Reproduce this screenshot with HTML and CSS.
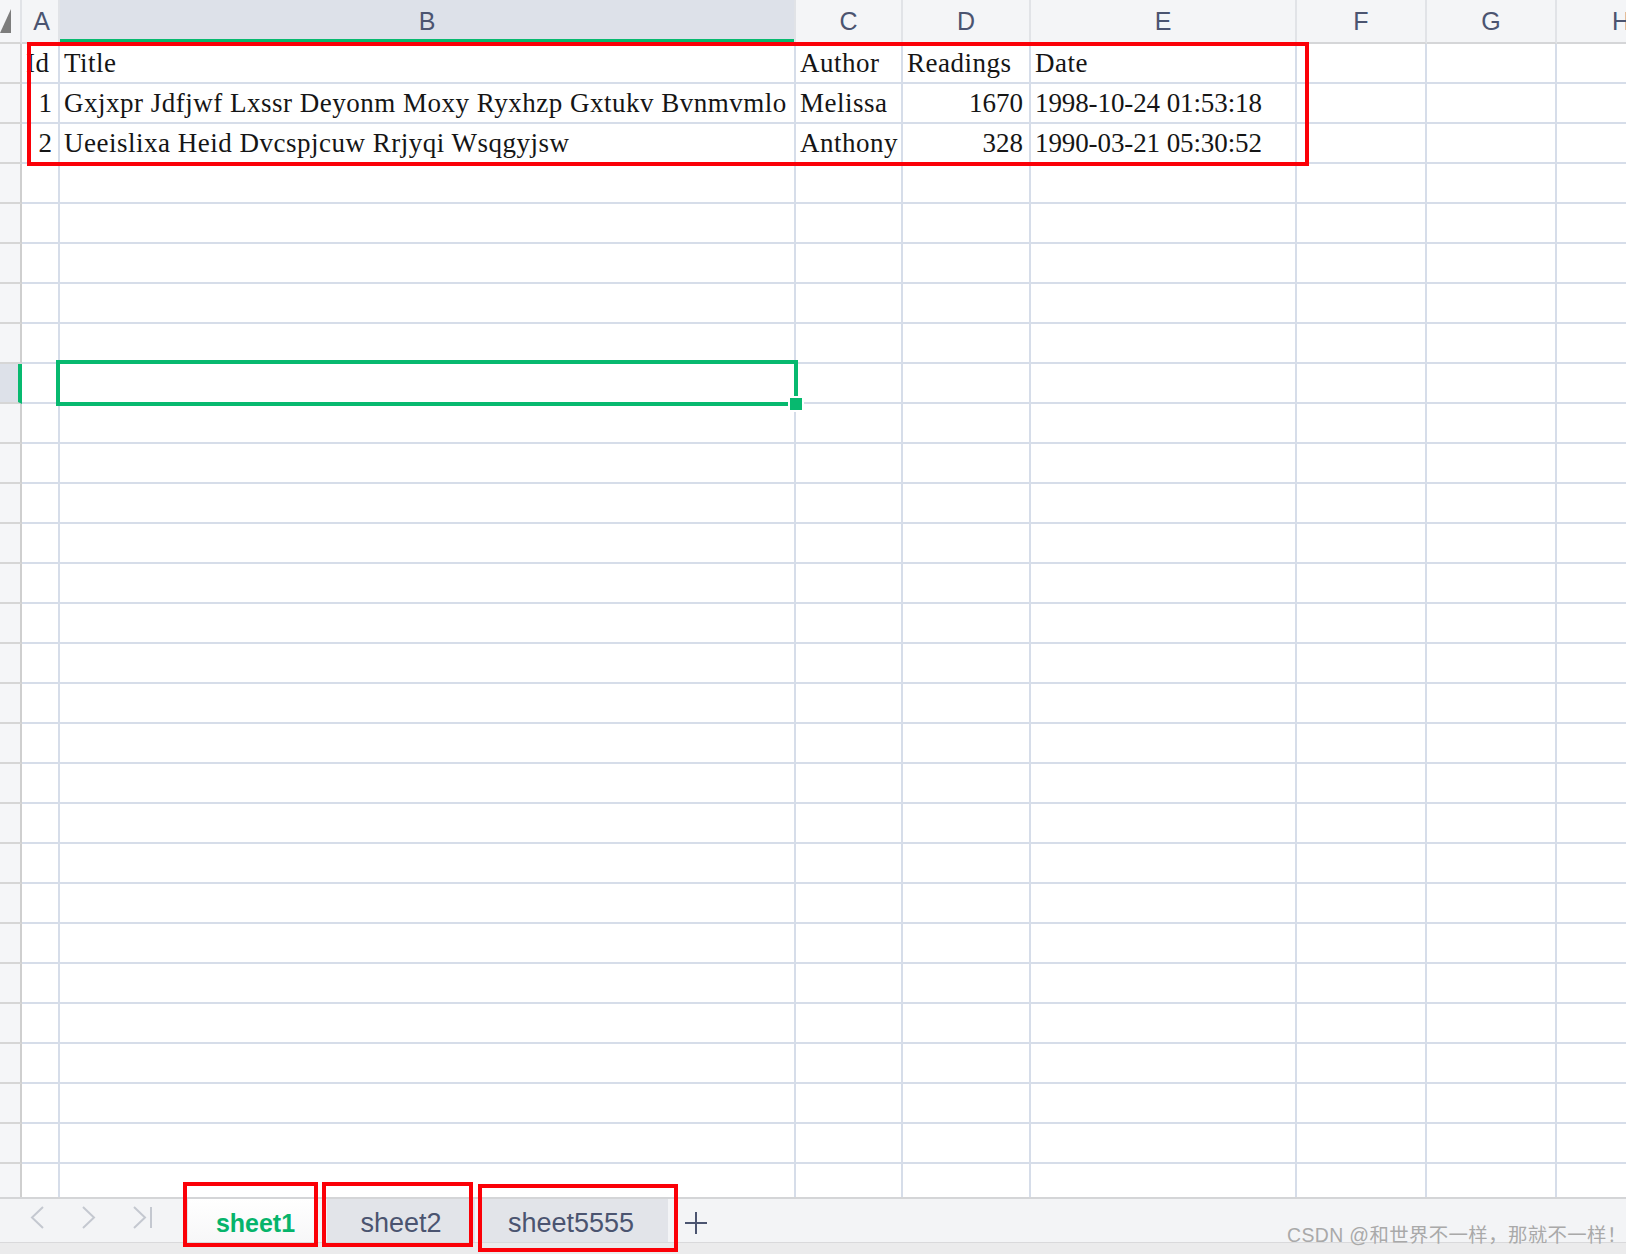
FILE: index.html
```html
<!DOCTYPE html>
<html lang="en">
<head>
<meta charset="utf-8">
<title>Sheet</title>
<link rel="stylesheet" href="styles.css">
</head>
<body>
<div class="app">
  <div class="sheet">
    <div class="row hdr">
      <div class="ch rh corner"><svg class="tri" width="12" height="34" viewBox="0 0 12 34"><polygon points="11,9 11,33 0,33" fill="#7d7d7d"/></svg></div>
      <div class="ch a">A</div>
      <div class="ch b selcol">B</div>
      <div class="ch cc">C</div>
      <div class="ch d">D</div>
      <div class="ch e">E</div>
      <div class="ch f">F</div>
      <div class="ch g">G</div>
      <div class="ch h">H</div>
    </div>
    <div class="row"><div class="rh"></div><div class="c a">Id</div><div class="c b">Title</div><div class="c cc">Author</div><div class="c d">Readings</div><div class="c e">Date</div><div class="c f"></div><div class="c g"></div><div class="c h"></div></div>
    <div class="row"><div class="rh"></div><div class="c a num">1</div><div class="c b">Gxjxpr Jdfjwf Lxssr Deyonm Moxy Ryxhzp Gxtukv Bvnmvmlo</div><div class="c cc">Melissa</div><div class="c d num">1670</div><div class="c e dt">1998-10-24 01:53:18</div><div class="c f"></div><div class="c g"></div><div class="c h"></div></div>
    <div class="row"><div class="rh"></div><div class="c a num">2</div><div class="c b">Ueeislixa Heid Dvcspjcuw Rrjyqi Wsqgyjsw</div><div class="c cc">Anthony</div><div class="c d num">328</div><div class="c e dt">1990-03-21 05:30:52</div><div class="c f"></div><div class="c g"></div><div class="c h"></div></div>
    <!-- rows 4-8 -->
    <div class="row"><div class="rh"></div><div class="c a"></div><div class="c b"></div><div class="c cc"></div><div class="c d"></div><div class="c e"></div><div class="c f"></div><div class="c g"></div><div class="c h"></div></div>
    <div class="row"><div class="rh"></div><div class="c a"></div><div class="c b"></div><div class="c cc"></div><div class="c d"></div><div class="c e"></div><div class="c f"></div><div class="c g"></div><div class="c h"></div></div>
    <div class="row"><div class="rh"></div><div class="c a"></div><div class="c b"></div><div class="c cc"></div><div class="c d"></div><div class="c e"></div><div class="c f"></div><div class="c g"></div><div class="c h"></div></div>
    <div class="row"><div class="rh"></div><div class="c a"></div><div class="c b"></div><div class="c cc"></div><div class="c d"></div><div class="c e"></div><div class="c f"></div><div class="c g"></div><div class="c h"></div></div>
    <div class="row"><div class="rh"></div><div class="c a"></div><div class="c b"></div><div class="c cc"></div><div class="c d"></div><div class="c e"></div><div class="c f"></div><div class="c g"></div><div class="c h"></div></div>
    <!-- row 9 (selected) -->
    <div class="row"><div class="rh selrow"></div><div class="c a"></div><div class="c b"></div><div class="c cc"></div><div class="c d"></div><div class="c e"></div><div class="c f"></div><div class="c g"></div><div class="c h"></div></div>
    <!-- rows 10-19 -->
    <div class="row"><div class="rh"></div><div class="c a"></div><div class="c b"></div><div class="c cc"></div><div class="c d"></div><div class="c e"></div><div class="c f"></div><div class="c g"></div><div class="c h"></div></div>
    <div class="row"><div class="rh"></div><div class="c a"></div><div class="c b"></div><div class="c cc"></div><div class="c d"></div><div class="c e"></div><div class="c f"></div><div class="c g"></div><div class="c h"></div></div>
    <div class="row"><div class="rh"></div><div class="c a"></div><div class="c b"></div><div class="c cc"></div><div class="c d"></div><div class="c e"></div><div class="c f"></div><div class="c g"></div><div class="c h"></div></div>
    <div class="row"><div class="rh"></div><div class="c a"></div><div class="c b"></div><div class="c cc"></div><div class="c d"></div><div class="c e"></div><div class="c f"></div><div class="c g"></div><div class="c h"></div></div>
    <div class="row"><div class="rh"></div><div class="c a"></div><div class="c b"></div><div class="c cc"></div><div class="c d"></div><div class="c e"></div><div class="c f"></div><div class="c g"></div><div class="c h"></div></div>
    <div class="row"><div class="rh"></div><div class="c a"></div><div class="c b"></div><div class="c cc"></div><div class="c d"></div><div class="c e"></div><div class="c f"></div><div class="c g"></div><div class="c h"></div></div>
    <div class="row"><div class="rh"></div><div class="c a"></div><div class="c b"></div><div class="c cc"></div><div class="c d"></div><div class="c e"></div><div class="c f"></div><div class="c g"></div><div class="c h"></div></div>
    <div class="row"><div class="rh"></div><div class="c a"></div><div class="c b"></div><div class="c cc"></div><div class="c d"></div><div class="c e"></div><div class="c f"></div><div class="c g"></div><div class="c h"></div></div>
    <div class="row"><div class="rh"></div><div class="c a"></div><div class="c b"></div><div class="c cc"></div><div class="c d"></div><div class="c e"></div><div class="c f"></div><div class="c g"></div><div class="c h"></div></div>
    <div class="row"><div class="rh"></div><div class="c a"></div><div class="c b"></div><div class="c cc"></div><div class="c d"></div><div class="c e"></div><div class="c f"></div><div class="c g"></div><div class="c h"></div></div>
    <!-- rows 20-29 -->
    <div class="row"><div class="rh"></div><div class="c a"></div><div class="c b"></div><div class="c cc"></div><div class="c d"></div><div class="c e"></div><div class="c f"></div><div class="c g"></div><div class="c h"></div></div>
    <div class="row"><div class="rh"></div><div class="c a"></div><div class="c b"></div><div class="c cc"></div><div class="c d"></div><div class="c e"></div><div class="c f"></div><div class="c g"></div><div class="c h"></div></div>
    <div class="row"><div class="rh"></div><div class="c a"></div><div class="c b"></div><div class="c cc"></div><div class="c d"></div><div class="c e"></div><div class="c f"></div><div class="c g"></div><div class="c h"></div></div>
    <div class="row"><div class="rh"></div><div class="c a"></div><div class="c b"></div><div class="c cc"></div><div class="c d"></div><div class="c e"></div><div class="c f"></div><div class="c g"></div><div class="c h"></div></div>
    <div class="row"><div class="rh"></div><div class="c a"></div><div class="c b"></div><div class="c cc"></div><div class="c d"></div><div class="c e"></div><div class="c f"></div><div class="c g"></div><div class="c h"></div></div>
    <div class="row"><div class="rh"></div><div class="c a"></div><div class="c b"></div><div class="c cc"></div><div class="c d"></div><div class="c e"></div><div class="c f"></div><div class="c g"></div><div class="c h"></div></div>
    <div class="row"><div class="rh"></div><div class="c a"></div><div class="c b"></div><div class="c cc"></div><div class="c d"></div><div class="c e"></div><div class="c f"></div><div class="c g"></div><div class="c h"></div></div>
    <div class="row"><div class="rh"></div><div class="c a"></div><div class="c b"></div><div class="c cc"></div><div class="c d"></div><div class="c e"></div><div class="c f"></div><div class="c g"></div><div class="c h"></div></div>
    <div class="row"><div class="rh"></div><div class="c a"></div><div class="c b"></div><div class="c cc"></div><div class="c d"></div><div class="c e"></div><div class="c f"></div><div class="c g"></div><div class="c h"></div></div>
    <div class="row"><div class="rh"></div><div class="c a"></div><div class="c b"></div><div class="c cc"></div><div class="c d"></div><div class="c e"></div><div class="c f"></div><div class="c g"></div><div class="c h"></div></div>
    <!-- row 30 (hidden below) -->
    <div class="row"><div class="rh"></div><div class="c a"></div><div class="c b"></div><div class="c cc"></div><div class="c d"></div><div class="c e"></div><div class="c f"></div><div class="c g"></div><div class="c h"></div></div>

    <div class="selection"></div>
    <div class="handle"></div>
  </div>

  <div class="tabbar">
    <svg class="nav" width="187" height="43" viewBox="0 0 187 43">
      <polyline points="43,8 32,18.5 43,29" fill="none" stroke="#c4c8d0" stroke-width="2"/>
      <polyline points="83,8 94,18.5 83,29" fill="none" stroke="#c4c8d0" stroke-width="2"/>
      <polyline points="134,8 145,18.5 134,29" fill="none" stroke="#c4c8d0" stroke-width="2"/>
      <line x1="151" y1="8" x2="151" y2="29" stroke="#c4c8d0" stroke-width="2"/>
    </svg>
    <div class="tab active">sheet1</div>
    <div class="tab t2">sheet2</div>
    <div class="tab t3">sheet5555</div>
    <svg class="plus" width="22" height="22" viewBox="0 0 22 22">
      <line x1="11" y1="0" x2="11" y2="22" stroke="#4b5470" stroke-width="2"/>
      <line x1="0" y1="11" x2="22" y2="11" stroke="#4b5470" stroke-width="2"/>
    </svg>
  </div>
  <div class="statusstrip"></div>

  <div class="mark mark-table"></div>
  <div class="mark mark-s1"></div>
  <div class="mark mark-s2"></div>
  <div class="mark mark-s3"></div>

  <div class="watermark">CSDN @和世界不一样，那就不一样！</div>
</div>
</body>
</html>
```

FILE: styles.css
```css
html, body {
  margin: 0;
  padding: 0;
  background: #ffffff;
}

body {
  overflow: hidden;
}

.app {
  position: relative;
  width: 1626px;
  height: 1254px;
  overflow: hidden;
  background: #ffffff;
}

.sheet {
  position: relative;
  height: 1197px;
  overflow: hidden;
}

.row {
  display: flex;
  height: 40px;
}

.row.hdr {
  height: 44px;
}

.row > div {
  flex: none;
  box-sizing: border-box;
  height: 100%;
}

.rh { width: 22px; }
.a { width: 38px; }
.b { width: 736px; }
.cc { width: 107px; }
.d { width: 128px; }
.e { width: 266px; }
.f { width: 130px; }
.g { width: 130px; }
.h { width: 130px; }

/* column header */
.ch {
  background: #f4f5f7;
  border-right: 2px solid #e1e3e7;
  border-bottom: 2px solid #d5d6d8;
  font-family: "Liberation Sans", Arial, sans-serif;
  font-size: 25px;
  color: #4b5470;
  text-align: center;
  line-height: 42px;
}

.ch.a {
  padding-left: 3px;
}

.ch.corner {
  position: relative;
  border-right: 2px solid #e1e3e7;
}

.tri {
  display: block;
}

.ch.selcol {
  background: #dde1e9;
  box-shadow: inset 0 -3px 0 #07b96f;
}

/* row header */
.rh {
  background: #f5f6f8;
  border-right: 2px solid #cfcfcf;
  border-bottom: 2px solid #d6d6d6;
}

.rh.selrow {
  background: #dde1e9;
  border-right: 4px solid #07b96f;
}

/* cells */
.c {
  border-right: 2px solid #d6dde9;
  border-bottom: 2px solid #d6dde9;
  font-family: "Liberation Serif", "Times New Roman", serif;
  font-size: 27px;
  letter-spacing: 0.5px;
  color: #151515;
  line-height: 36px;
  padding: 1px 0 1px 4px;
  white-space: nowrap;
  overflow: hidden;
}

.c.num {
  text-align: right;
  padding-left: 0;
  padding-right: 6px;
  letter-spacing: 0;
}

.c.dt {
  letter-spacing: -0.1px;
}

/* selection */
.selection {
  position: absolute;
  left: 56px;
  top: 360px;
  width: 742px;
  height: 46px;
  box-sizing: border-box;
  border: 4px solid #07b96f;
}

.handle {
  position: absolute;
  left: 788px;
  top: 396px;
  width: 16px;
  height: 16px;
  box-sizing: border-box;
  background: #07b96f;
  border: 2px solid #ffffff;
}

/* tab bar */
.tabbar {
  display: flex;
  align-items: stretch;
  height: 43px;
  background: #f3f4f6;
  border-top: 2px solid #d4d5d7;
}

.nav {
  flex: none;
  display: block;
}

.tab {
  flex: none;
  box-sizing: border-box;
  font-family: "Liberation Sans", Arial, sans-serif;
  font-size: 27px;
  line-height: 37px;
  padding-top: 6px;
  text-align: center;
  color: #4b5470;
  background: #e2e4e9;
}

.tab.active {
  width: 128px;
  padding-left: 8px;
  background: linear-gradient(#ffffff, #f7f7f8);
  border-left: 1px solid #e4e5e8;
  color: #06b46b;
  font-weight: bold;
  font-size: 25px;
}

.tab.t2 {
  width: 148px;
  margin-left: 12px;
}

.tab.t3 {
  width: 188px;
  margin-left: 5px;
  padding-right: 6px;
}

.plus {
  flex: none;
  margin-left: 17px;
  margin-top: 13px;
}

.statusstrip {
  height: 11px;
  background: #ebebec;
  border-top: 1px solid #d9d9db;
}

/* red annotation boxes */
.mark {
  position: absolute;
  box-sizing: border-box;
  border: 4px solid #fb0007;
}

.mark-table {
  left: 27px;
  top: 42px;
  width: 1282px;
  height: 124px;
}

.mark-s1 {
  left: 183px;
  top: 1182px;
  width: 135px;
  height: 65px;
}

.mark-s2 {
  left: 322px;
  top: 1182px;
  width: 151px;
  height: 65px;
}

.mark-s3 {
  left: 478px;
  top: 1184px;
  width: 200px;
  height: 68px;
}

.watermark {
  position: absolute;
  left: 1287px;
  top: 1225px;
  font-family: "Liberation Sans", "Noto Sans CJK SC", sans-serif;
  font-size: 19.4px;
  letter-spacing: 0.4px;
  line-height: 20px;
  color: #a9a9a9;
  white-space: nowrap;
}
```
